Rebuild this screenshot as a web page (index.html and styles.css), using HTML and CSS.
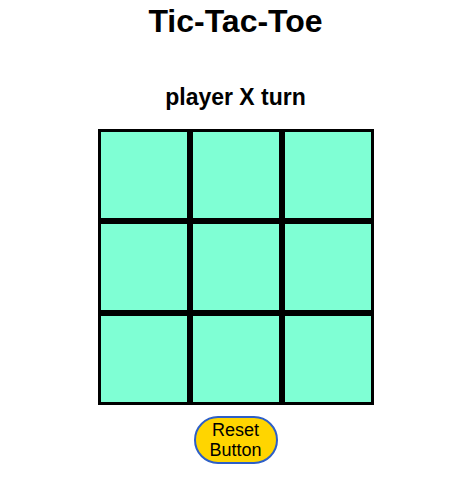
FILE: index.html
```html
<!DOCTYPE html>
<html>
<head>
<meta charset="utf-8">
<link rel="stylesheet" href="styles.css">
</head>
<body>
<div class="app">
  <h1 class="title">Tic-Tac-Toe</h1>
  <h2 class="status">player X turn</h2>
  <div class="board">
    <div class="cell"></div><div class="cell"></div><div class="cell"></div>
    <div class="cell"></div><div class="cell"></div><div class="cell"></div>
    <div class="cell"></div><div class="cell"></div><div class="cell"></div>
  </div>
  <button class="reset">Reset Button</button>
</div>
</body>
</html>
```
FILE: styles.css
```css
html, body {
  margin: 0;
  padding: 0;
  background: #ffffff;
}
.app {
  display: flex;
  flex-direction: column;
  align-items: center;
  padding-left: 16px;
  font-family: "Liberation Sans", Arial, sans-serif;
  color: #000;
}
.title {
  margin: 3px 0 0 0;
  font-size: 32px;
  line-height: 37px;
  font-weight: bold;
}
.status {
  margin: 43px 0 0 0;
  font-size: 23px;
  line-height: 28px;
  font-weight: bold;
}
.board {
  margin-top: 18px;
  display: grid;
  grid-template-columns: repeat(3, 92px);
  grid-template-rows: repeat(3, 92px);
}
.cell {
  box-sizing: border-box;
  border: 3px solid #000;
  background: #7fffd4;
}
.reset {
  margin-top: 11px;
  width: 84px;
  height: 48px;
  box-sizing: border-box;
  border: 2px solid #2d5fc8;
  border-radius: 24px;
  background: #ffd500;
  font-family: "Liberation Sans", Arial, sans-serif;
  font-size: 18px;
  line-height: 20px;
  color: #000;
  padding: 0 4px;
}
```
